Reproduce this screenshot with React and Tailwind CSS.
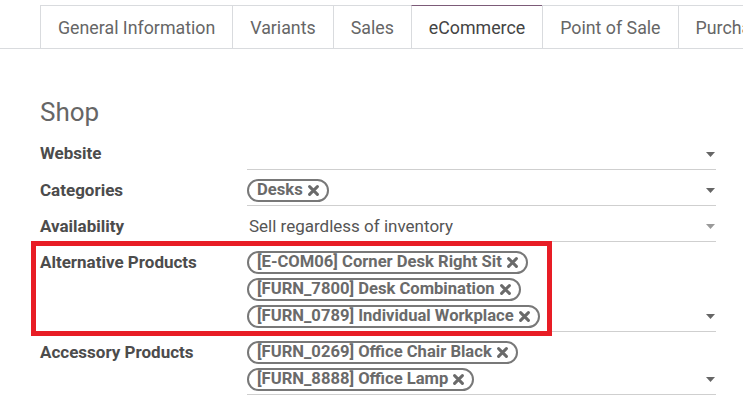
const TABS = ['General Information', 'Variants', 'Sales', 'eCommerce', 'Point of Sale', 'Purchase'];

const XIcon = () => (
    <svg width="11" height="11" viewBox="0 0 11 11" className="shrink-0">
        <path d="M1.6 1.6 L9.4 9.4 M9.4 1.6 L1.6 9.4" stroke="#6a6a6a" strokeWidth="3" strokeLinecap="round" />
    </svg>
);

const Tag = ({ label }) => (
    <span className="inline-flex items-center h-[23px] border-2 border-[#787878] rounded-full pl-[8px] pr-[8px] gap-[5px] text-[16.6px] font-bold text-[#6a6a6a] leading-none whitespace-nowrap">
        {label}
        <XIcon />
    </span>
);

const Arrow = ({ light }) => (
    <div className="h-[23px] w-[16px] flex items-center justify-end pr-[1px] shrink-0">
        <svg width="9" height="5" viewBox="0 0 9 5">
            <path d="M0 0 L9 0 L4.5 5 Z" fill={light ? '#9a9a9a' : '#666'} />
        </svg>
    </div>
);

const Label = ({ children }) => (
    <div className="text-[17px] font-bold text-[#4c4c4c] leading-[23px] pt-[9px]">{children}</div>
);

export default function App() {
    return (
        <div className="w-[743px] h-[412px] overflow-hidden bg-white font-['Roboto',sans-serif]">
            {/* Tabs */}
            <div className="flex pt-[5px] pl-[40px] border-b border-[#d9dbde] whitespace-nowrap overflow-hidden">
                {TABS.map((t, i) => {
                    const active = t === 'eCommerce';
                    return (
                        <div
                            key={t}
                            className={`shrink-0 h-[44px] flex items-center pt-[2px] px-[17px] text-[17.8px] border-t border-l -mb-px ${i === TABS.length - 1 ? 'border-r' : ''} ${active
                                ? 'border-t-[#7c5b78] border-l-[#d9dbde] text-[#444] bg-white border-b border-b-white'
                                : 'border-[#d9dbde] text-[#666]'
                                }`}
                        >
                            {t}
                        </div>
                    );
                })}
            </div>

            {/* Form */}
            <div className="pl-[40px] pt-[48px] w-[716px]">
                <h2 className="text-[26px] text-[#666] leading-[31px] mb-[5px]">Shop</h2>

                <div className="relative grid grid-cols-[207px_469px]">
                    <Label>Website</Label>
                    <div className="flex items-end border-b border-[#cfcfcf] pt-[10px] pb-[3px]">
                        <div className="flex-1 h-[23px]" />
                        <Arrow />
                    </div>

                    <Label>Categories</Label>
                    <div className="flex items-end border-b border-[#cfcfcf] pt-[9px] pb-[3px]">
                        <div className="flex-1 flex flex-wrap gap-x-1 gap-y-[4px]">
                            <Tag label="Desks" />
                        </div>
                        <Arrow />
                    </div>

                    <Label>Availability</Label>
                    <div className="flex items-end border-b border-[#cfcfcf] pt-[9px] pb-[3px]">
                        <div className="flex-1 h-[23px] leading-[23px] text-[17px] text-[#555] pl-[2px]">Sell regardless of inventory</div>
                        <Arrow light />
                    </div>

                    <Label>Alternative Products</Label>
                    <div className="flex items-end border-b border-[#cfcfcf] pt-[9px] pb-[3px]">
                        <div className="flex-1 flex flex-wrap gap-x-1 gap-y-[4px]">
                            <Tag label="[E-COM06] Corner Desk Right Sit" />
                            <Tag label="[FURN_7800] Desk Combination" />
                            <Tag label="[FURN_0789] Individual Workplace" />
                        </div>
                        <Arrow />
                    </div>

                    <Label>Accessory Products</Label>
                    <div className="flex items-end border-b border-[#cfcfcf] pt-[9px] pb-[3px]">
                        <div className="flex-1 flex flex-wrap gap-x-1 gap-y-[4px]">
                            <Tag label="[FURN_0269] Office Chair Black" />
                            <Tag label="[FURN_8888] Office Lamp" />
                        </div>
                        <Arrow />
                    </div>

                    {/* highlight annotation */}
                    <div className="absolute left-[-9px] top-[108px] w-[521px] h-[95px] border-[5px] border-[#e81d25] pointer-events-none" />
                </div>
            </div>
        </div>
    );
}
